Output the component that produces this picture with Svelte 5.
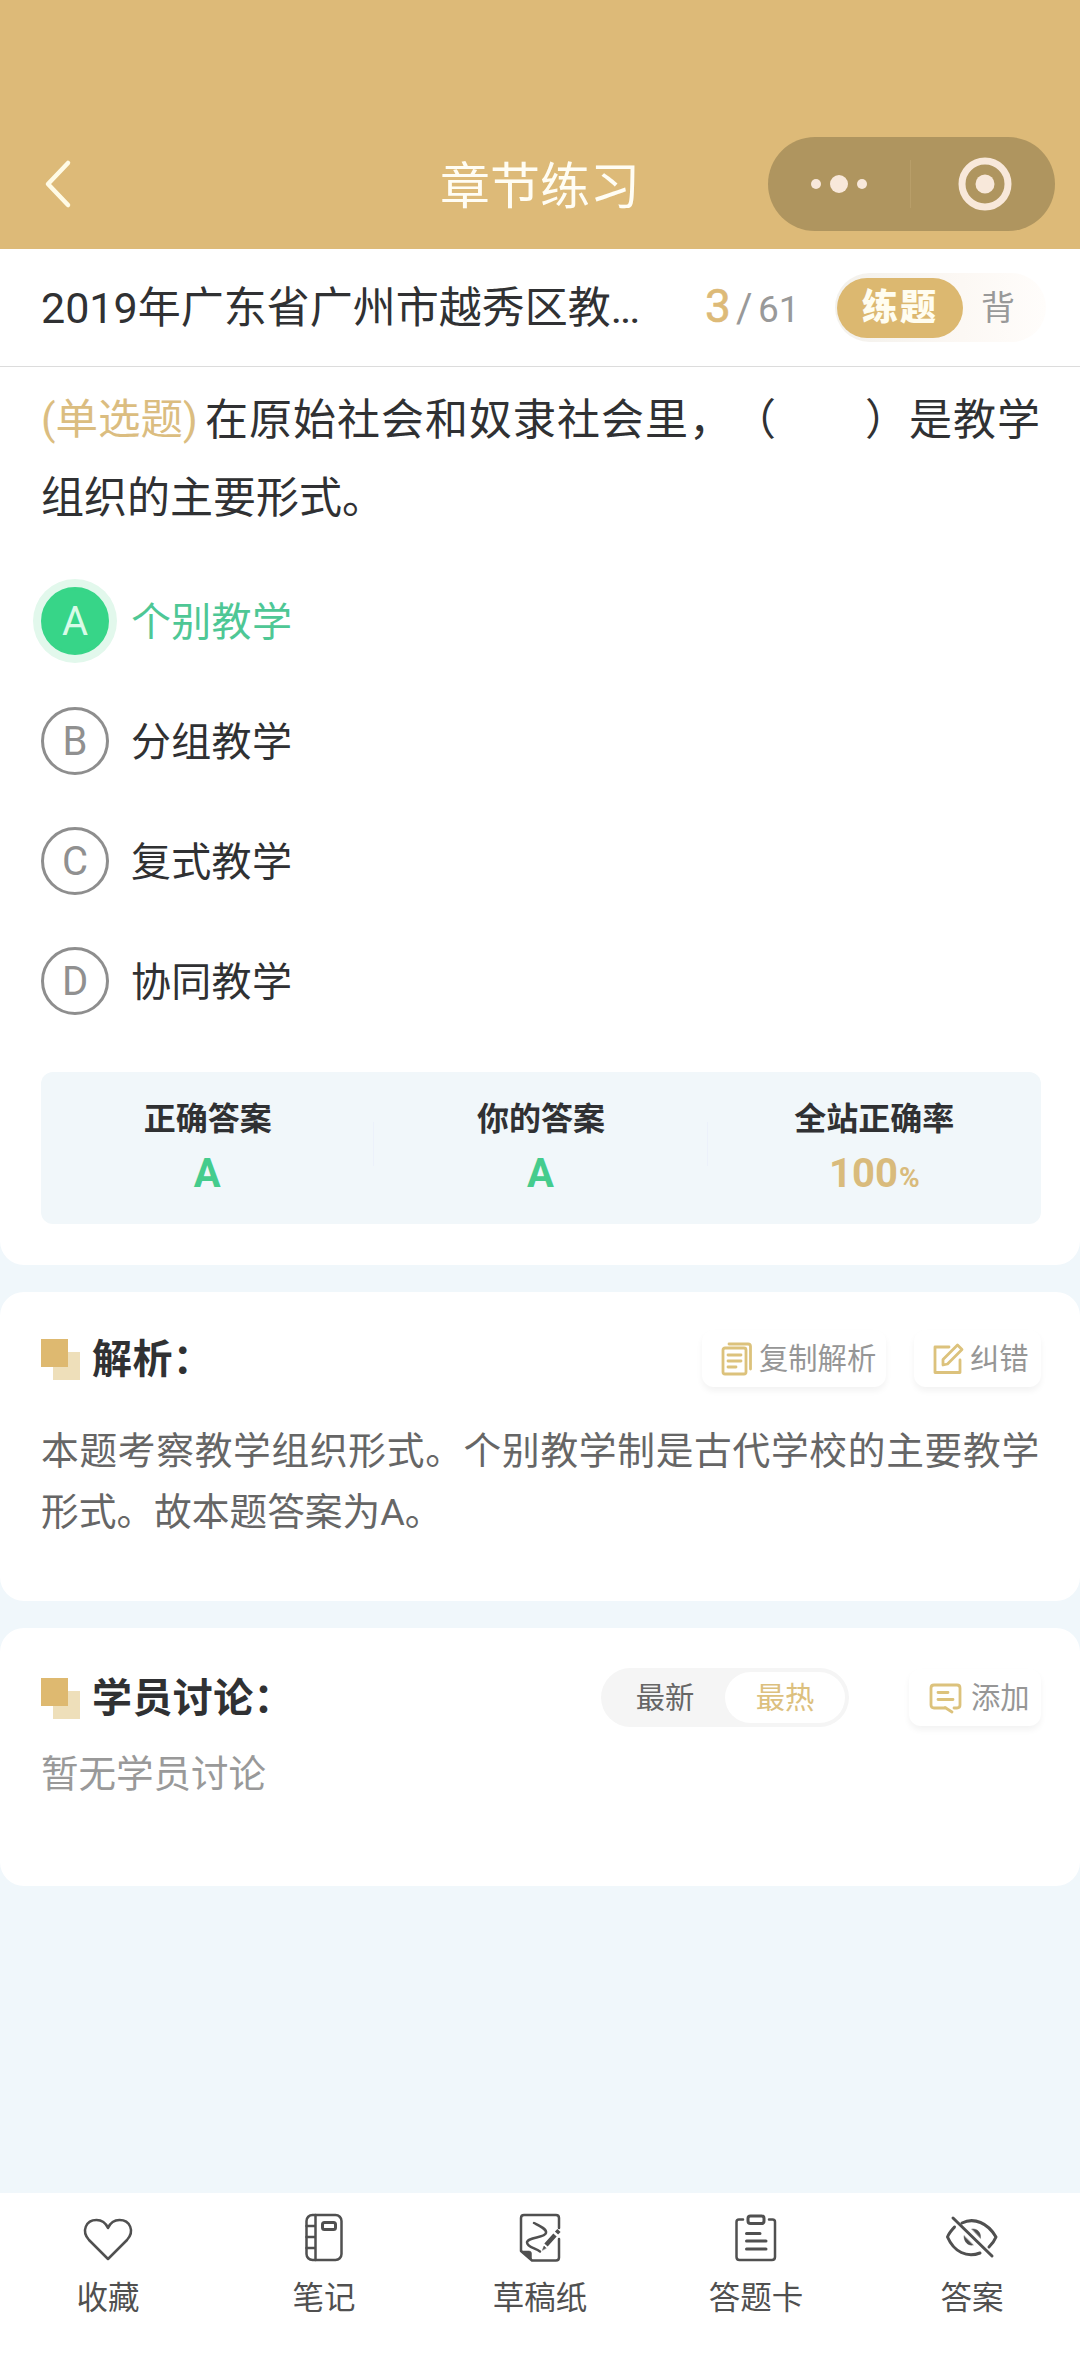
<script lang="ts">
	interface Option {
		key: string;
		text: string;
	}

	const options: Option[] = [
		{ key: 'A', text: '个别教学' },
		{ key: 'B', text: '分组教学' },
		{ key: 'C', text: '复式教学' },
		{ key: 'D', text: '协同教学' }
	];

	const stats = [
		{ label: '正确答案', value: 'A', unit: '' },
		{ label: '你的答案', value: 'A', unit: '' },
		{ label: '全站正确率', value: '100', unit: '%' }
	];

	const tabs = [
		{ id: 'heart', label: '收藏' },
		{ id: 'note', label: '笔记' },
		{ id: 'draft', label: '草稿纸' },
		{ id: 'card', label: '答题卡' },
		{ id: 'eye', label: '答案' }
	];

	let selected = $state('A');
	let mode = $state('practice');
	let sort = $state('hot');
</script>

<div class="page">
	<header class="nav">
		<svg class="back" viewBox="0 0 30 50" aria-hidden="true">
			<path d="M26 4 L6 25 L26 46" />
		</svg>
		<h1>章节练习</h1>
		<div class="capsule">
			<svg class="dots" viewBox="0 0 60 20" aria-hidden="true">
				<circle cx="7" cy="10" r="5" />
				<circle cx="30" cy="10" r="9" />
				<circle cx="53" cy="10" r="5" />
			</svg>
			<span class="capsule-line"></span>
			<svg class="target" viewBox="0 0 54 54" aria-hidden="true">
				<circle class="ring" cx="27" cy="27" r="23" />
				<circle cx="27" cy="27" r="9.5" />
			</svg>
		</div>
	</header>

	<div class="paper">
		<span class="paper-name">2019年广东省广州市越秀区教<span class="more">...</span></span>
		<span class="progress"><b>3</b><i>/</i><span>61</span></span>
		<div class="mode">
			<button class:on={mode === 'practice'} onclick={() => (mode = 'practice')}>练题</button>
			<button class:on={mode === 'recite'} onclick={() => (mode = 'recite')}>背</button>
		</div>
	</div>

	<section class="card question">
		<div class="stem">
			<div class="line"><span class="tag">(单选题)</span><span class="first">在原始社会和奴隶社会里，（　　）是教学</span></div>
			<div class="line">组织的主要形式。</div>
		</div>

		<div class="options">
			{#each options as option (option.key)}
				<button
					class="option"
					class:right={selected === option.key}
					onclick={() => (selected = option.key)}
				>
					<span class="option-key">{option.key}</span>
					<span class="option-text">{option.text}</span>
				</button>
			{/each}
		</div>

		<div class="stats">
			{#each stats as stat (stat.label)}
				<div class="stat">
					<span class="stat-label">{stat.label}</span>
					<span class="stat-value" class:gold={stat.unit}>{stat.value}<small>{stat.unit}</small></span>
				</div>
			{/each}
		</div>
	</section>

	<section class="card analysis">
		<div class="card-head">
			<span class="mark"></span>
			<h2>解析：</h2>
			<button class="chip copy">
				<svg viewBox="0 0 32 34" aria-hidden="true">
					<rect x="2" y="6" width="23" height="26" rx="2" />
					<path d="M8 2 H27 Q29.500 2 29.500 4.500 V27 M7 13 H20 M7 19 H20 M7 25 H15" />
				</svg>
				<span>复制解析</span>
			</button>
			<button class="chip">
				<svg viewBox="0 0 32 34" aria-hidden="true">
					<path d="M17 5 H3 V30.500 H28 V18" />
					<path d="M11 23 V17.500 L25.500 3 L30 7.500 L15.500 22 Z" />
				</svg>
				<span>纠错</span>
			</button>
		</div>
		<div class="analysis-text">
			<div class="wide">本题考察教学组织形式。个别教学制是古代学校的主要教学</div>
			<div>形式。故本题答案为A。</div>
		</div>
	</section>

	<section class="card talk">
		<div class="card-head">
			<span class="mark"></span>
			<h2>学员讨论：</h2>
			<div class="sort">
				<button class:on={sort === 'new'} onclick={() => (sort = 'new')}>最新</button>
				<button class:on={sort === 'hot'} onclick={() => (sort = 'hot')}>最热</button>
			</div>
			<button class="chip add">
				<svg viewBox="0 0 34 34" aria-hidden="true">
					<path d="M17 27 H5 Q2 27 2 24 V7 Q2 4 5 4 H28 Q31 4 31 7 V24 Q31 27 28 27 H25 M16 26.500 L23 31" />
					<path d="M9 11.500 H19 M9 18.500 H24" />
				</svg>
				<span>添加</span>
			</button>
		</div>
		<p class="empty">暂无学员讨论</p>
	</section>

	<nav class="tabs">
		{#each tabs as tab (tab.id)}
			<button class="tab">
				<svg viewBox="0 0 54 54" aria-hidden="true">
					{#if tab.id === 'heart'}
						<path d="M27 49 L8 30 C0 21 5 10 15.500 10 C21 10 25 13.500 27 18 C29 13.500 33 10 38.500 10 C49 10 54 21 46 30 Z" />
					{:else if tab.id === 'note'}
						<rect x="9.500" y="5" width="35" height="45" rx="6" />
						<path d="M18.500 5 V50 M9.500 16 H18 M9.500 27 H18 M9.500 38 H18" />
						<rect class="bold" x="25.500" y="12.500" width="13" height="7" rx="2" />
					{:else if tab.id === 'draft'}
						<path d="M46 18 V8 Q46 5 43 5 H11 Q8 5 8 8 V41 L19 50.500 H43 Q46 50.500 46 47.500 V29" />
						<path class="solid" d="M8 41 H16 Q18.500 41 18.500 43.500 V50 Z" />
						<path d="M21 13 C27 16 34 19 33 23 C32 28 14 27 14 32.500 C14 37 22 38 27 41.500" />
						<path class="pencil" d="M33 35 L42 25 M43.500 23 L46 20.500" />
						<path class="solid" d="M29.500 40 L31 36 L33 38 Z" />
					{:else if tab.id === 'card'}
						<path d="M14 9.500 H10 Q7.500 9.500 7.500 12 V47 Q7.500 50 10.500 50 H43 Q46 50 46 47 V12 Q46 9.500 43.500 9.500 H40" />
						<rect class="bold" x="19" y="6" width="16" height="7.500" rx="2.500" />
						<path class="bold" d="M17.500 23.500 H31 M17.500 31 H37 M17.500 39 H37" />
					{:else}
						<path d="M17 13 C29 7 43 13 51 27 C49 32 47 34 44 37 M35 43 C22 48 9 42 2.500 27 C4 23 7 20 9.500 17" class="bold" />
						<path class="solid" d="M27 19 C33 18.500 36 23 35.500 28 Z" />
						<path class="solid" d="M19 26 C19 32 23 36 28 35 Z" />
						<path d="M8 8 L47 46" class="bold" />
					{/if}
				</svg>
				<span>{tab.label}</span>
			</button>
		{/each}
	</nav>
</div>

<style>
	:global(body) {
		background: #f0f7fb;
	}
	.page {
		width: 1080px;
		height: 2376px;
		display: flex;
		flex-direction: column;
		overflow: hidden;
		background: #f0f7fb;
		color: #303133;
		font-family: Roboto, 'Noto Sans CJK SC', sans-serif;
		line-height: 1.3;
		text-spacing-trim: space-all;
	}
	button {
		margin: 0;
		padding: 0;
		border: 0;
		background: none;
		color: inherit;
		font: inherit;
	}
	svg {
		flex-shrink: 0;
		fill: none;
		stroke-linecap: round;
		stroke-linejoin: round;
	}
	h1,
	h2,
	p {
		margin: 0;
	}

	.nav {
		display: grid;
		grid-template-columns: 1fr auto 1fr;
		align-items: center;
		height: 94px;
		padding: 137px 25px 18px 42px;
		background: #ddba78;
		color: #fffdf4;
	}
	.back {
		width: 30px;
		height: 50px;
		stroke: #fffbe6;
		stroke-width: 4.500;
	}
	h1 {
		margin-left: -17px;
		padding-top: 6px;
		font-size: 50px;
		font-weight: 400;
		line-height: 88px;
	}
	.capsule {
		justify-self: end;
		display: flex;
		align-items: center;
		box-sizing: border-box;
		width: 287px;
		height: 94px;
		padding-left: 41px;
		border-radius: 47px;
		background: #af955f;
	}
	.capsule svg {
		fill: #f8e8da;
	}
	.dots {
		width: 60px;
		height: 20px;
	}
	.capsule-line {
		width: 1px;
		height: 48px;
		margin: 0 47px 0 41px;
		background: #b89e69;
	}
	.target {
		width: 54px;
		height: 54px;
	}
	.target .ring {
		fill: none;
		stroke: #f8e8da;
		stroke-width: 7;
	}

	.paper {
		display: flex;
		align-items: center;
		height: 117px;
		padding-left: 41px;
		border-bottom: 1px solid #dcdcdc;
		background: #fff;
	}
	.paper-name {
		width: 664px;
		padding-top: 3px;
		font-size: 43px;
		white-space: nowrap;
	}
	.more {
		letter-spacing: -2px;
	}
	.progress {
		display: flex;
		align-items: baseline;
		width: 130px;
		padding-bottom: 2px;
		font-size: 37px;
		color: #999;
	}
	.progress b {
		width: 31px;
		font-size: 46px;
		font-weight: 400;
		color: #ddba78;
		-webkit-text-stroke: 0.6px #ddba78;
	}
	.progress i {
		width: 22px;
		font-size: 40px;
		font-style: normal;
	}
	.mode {
		display: flex;
		align-items: center;
		box-sizing: border-box;
		width: 211px;
		height: 69px;
		padding: 0 2px;
		border-radius: 35px;
		background: linear-gradient(90deg, #f3f1ec, #fcf8f4 60%, #fffdfb);
	}
	.mode button {
		width: 70px;
		height: 60px;
		border-radius: 30px;
		font-size: 34px;
		line-height: 61px;
		color: #999;
	}
	.mode button.on {
		width: 126px;
		font-size: 36px;
		font-weight: 900;
		letter-spacing: 2px;
		background: #dcb870;
		color: #fffdf0;
	}

	.card {
		box-sizing: border-box;
		padding: 0 39px 0 41px;
		border-radius: 24px;
		background: #fff;
	}
	.question {
		height: 898px;
		padding-top: 14px;
		border-radius: 0 0 24px 24px;
	}
	.stem {
		font-size: 43px;
		line-height: 78px;
		white-space: nowrap;
	}
	.line {
		display: flex;
	}
	.tag {
		width: 164px;
		font-size: 42.500px;
		color: #dbbd80;
	}
	.first {
		letter-spacing: 1px;
	}
	.options {
		padding-top: 24px;
	}
	.option {
		display: flex;
		align-items: center;
		height: 120px;
		font-size: 40px;
	}
	.option-key {
		box-sizing: border-box;
		width: 68px;
		height: 68px;
		margin-right: 22px;
		border: 3px solid #8e8e8e;
		border-radius: 50%;
		line-height: 64px;
		text-align: center;
		color: #909090;
	}
	.option-text {
		padding-top: 3px;
		letter-spacing: 0.300px;
	}
	.right .option-key {
		border-color: #37d588;
		background: #37d588;
		box-shadow: 0 0 0 8px #e2f8ec;
		color: #d9fbe8;
	}
	.right .option-text {
		color: #4ec795;
	}
	.stats {
		display: flex;
		height: 152px;
		margin-top: 31px;
		border-radius: 12px;
		background: #f1f7fa;
	}
	.stat {
		display: flex;
		flex: 1;
		flex-direction: column;
		align-items: center;
		padding-top: 22px;
		font-weight: 700;
		background: linear-gradient(#ecf1fa, #ecf1fa) right 50px / 1px 44px no-repeat;
	}
	.stat:last-child {
		background: none;
	}
	.stat-label {
		font-size: 32px;
		line-height: 51px;
	}
	.stat-value {
		font-size: 40px;
		line-height: 58px;
		color: #45cc8d;
	}
	.stat-value.gold {
		color: #d9bb7c;
	}
	.stat-value small {
		margin-left: 1px;
		font-size: 28px;
	}

	.analysis {
		height: 309px;
		margin-top: 27px;
		padding-top: 38px;
	}
	.card-head {
		display: flex;
		align-items: center;
		height: 57px;
	}
	.mark {
		width: 39px;
		height: 41px;
		margin: 2px 12px 0 0;
		background:
			linear-gradient(#deb970, #deb970) 0 0 / 27px 28px no-repeat,
			linear-gradient(#eedfba, #eedfba) 100% 100% / 27px 28px no-repeat;
	}
	h2 {
		margin-right: auto;
		padding-top: 3px;
		font-size: 40px;
		font-weight: 700;
		letter-spacing: 0.400px;
		line-height: 54px;
	}
	.chip {
		display: flex;
		align-items: center;
		box-sizing: border-box;
		width: 127px;
		height: 57px;
		padding-left: 18px;
		border-radius: 12px;
		box-shadow: 0 4px 6px rgba(0, 0, 0, 0.05);
		font-size: 29.300px;
		white-space: nowrap;
		color: #969696;
	}
	.chip span {
		padding-top: 1px;
	}
	.chip svg {
		width: 32px;
		height: 34px;
		margin-right: 6px;
		stroke: #dcc27c;
		stroke-width: 2.800;
	}
	.chip.copy {
		width: 184px;
		margin-right: 28px;
		padding-left: 19px;
	}
	.analysis-text {
		padding-top: 34px;
		font-size: 37.700px;
		line-height: 61px;
		white-space: nowrap;
		color: #666;
	}
	.wide {
		letter-spacing: 0.730px;
	}

	.talk {
		height: 258px;
		margin-top: 27px;
		padding-top: 41px;
	}
	.sort {
		display: flex;
		box-sizing: border-box;
		width: 248px;
		height: 59px;
		padding: 4px;
		border-radius: 30px;
		background: #f5f5f5;
	}
	.sort button {
		width: 120px;
		padding-top: 2px;
		border-radius: 26px;
		font-size: 29.300px;
		color: #666;
	}
	.sort button.on {
		background: #fff;
		color: #dcc07e;
	}
	.chip.add {
		width: 132px;
		margin-left: 60px;
		padding-left: 20px;
	}
	.chip.add svg {
		width: 34px;
		margin-right: 8px;
	}
	.empty {
		padding-top: 19px;
		font-size: 37.500px;
		line-height: 58px;
		color: #999;
	}

	.tabs {
		display: flex;
		height: 183px;
		margin-top: auto;
		background: #fff;
		color: #505050;
	}
	.tab {
		display: flex;
		flex: 1;
		flex-direction: column;
		align-items: center;
		padding-top: 17px;
		font-size: 31.500px;
		line-height: 46px;
	}
	.tab svg {
		width: 54px;
		height: 54px;
		margin-bottom: 12px;
		stroke: #505050;
		stroke-width: 2.500;
	}
	.tab .bold {
		stroke-width: 3;
	}
	.tab .solid {
		fill: #505050;
		stroke-width: 0.500;
	}
	.tab .pencil {
		stroke-width: 4.500;
		stroke-linecap: butt;
	}
</style>
